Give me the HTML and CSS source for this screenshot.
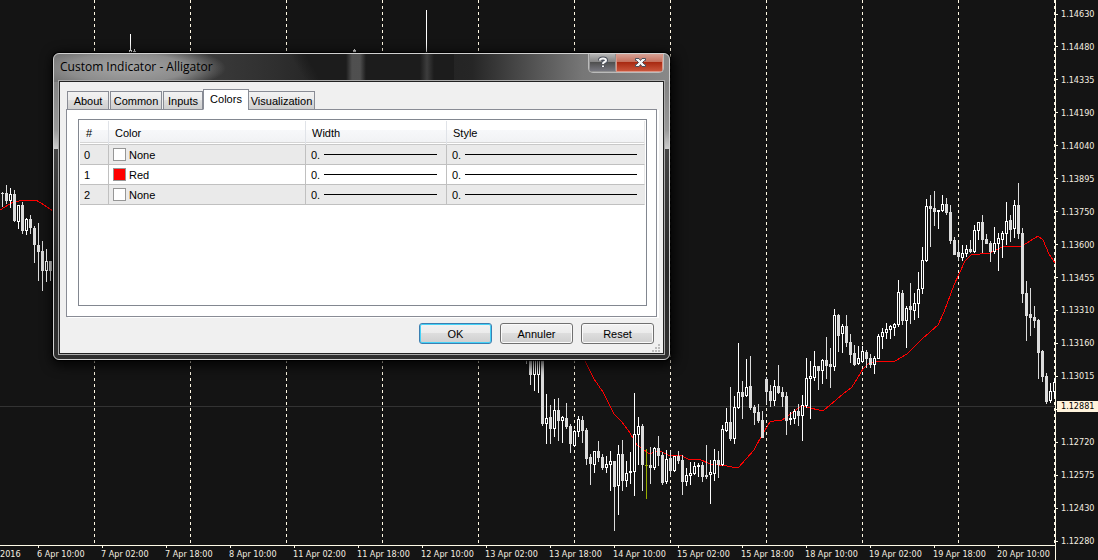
FILE: index.html
```html
<!DOCTYPE html>
<html lang="en">
<head>
<meta charset="utf-8">
<title>Custom Indicator - Alligator</title>
<link rel="stylesheet" href="styles.css">
</head>
<body>
<main class="terminal">
  <section class="chart">
    <svg class="plot" viewBox="0 0 1055 545" preserveAspectRatio="none" aria-label="Price chart">
      <g id="days" class="days"></g>
      <path class="last-line" d="M0 406.500H1055"/>
      <polyline class="average" points="0,210 5,207 13,202 25,200 36,200 44,205 53,211"/>
      <polyline class="average" points="583,356 585,361 594,379 603,392 614,414 622,422 630,433 637,445 643,449 648,453 652,453 657,451 662,452 670,456 680,455 688,459 699,459 710,464 718,465 727,466 732,467 739,467 746,459 754,450 762,435 770,422 774,421 782,420 788,416 801,406 806,407 823,411 830,405 843,394 852,387 863,369 868,364 880,361 895,361 907,354 913,348 922,339 930,332 938,325 944,312 954,285 965,261 971,255 980,254 990,253 1002,247 1006,246 1022,246 1038,236 1043,240 1049,254 1055,263"/>
      <g id="candles"></g>
    </svg>
    <ol class="prices" id="prices"></ol>
    <output class="last-price">1.12881</output>
  </section>
  <ol class="times" id="times"></ol>
</main>

<section class="dialog" role="dialog" aria-labelledby="title">
  <header class="titlebar">
    <h1 class="title" id="title">Custom Indicator - Alligator</h1>
    <div class="caption-buttons">
      <button class="caption help" type="button" aria-label="Help">
        <svg width="12" height="13" viewBox="0 0 12 13"><path class="glyph-edge" d="M3 4.500V4Q3 2.500 6 2.500T9 4.500Q9 5.500 7.500 6T6 8M6 9.500V11"/><path class="glyph" d="M3 4.500V4Q3 2.500 6 2.500T9 4.500Q9 5.500 7.500 6T6 8M6 9.500V11"/></svg>
      </button>
      <button class="caption close" type="button" aria-label="Close">
        <svg width="14" height="13" viewBox="0 0 14 13"><path class="shape" d="M2.500 2.500H6L7.500 4.500L9 2.500H12.500V4.500H11.500L9.500 6.500L11.500 8.500H12.500V10.500H9L7.500 8.500L6 10.500H2.500V8.500H3.500L5.500 6.500L3.500 4.500H2.500Z"/></svg>
      </button>
    </div>
  </header>
  <div class="client">
    <div class="tabs" role="tablist">
      <button class="tab" type="button" role="tab">About</button>
      <button class="tab" type="button" role="tab">Common</button>
      <button class="tab" type="button" role="tab">Inputs</button>
      <button class="tab active" type="button" role="tab" aria-selected="true">Colors</button>
      <button class="tab" type="button" role="tab">Visualization</button>
    </div>
    <div class="page" role="tabpanel">
      <div class="list">
        <table class="grid">
          <colgroup><col class="col-id"><col class="col-color"><col class="col-width"><col></colgroup>
          <thead><tr><th>#</th><th>Color</th><th>Width</th><th>Style</th></tr></thead>
          <tbody>
            <tr><td>0</td><td><div class="cell"><i class="swatch"></i>None</div></td><td><div class="cell">0.<i class="line"></i></div></td><td><div class="cell">0.<i class="line"></i></div></td></tr>
            <tr><td>1</td><td><div class="cell"><i class="swatch red"></i>Red</div></td><td><div class="cell">0.<i class="line"></i></div></td><td><div class="cell">0.<i class="line"></i></div></td></tr>
            <tr><td>2</td><td><div class="cell"><i class="swatch"></i>None</div></td><td><div class="cell">0.<i class="line"></i></div></td><td><div class="cell">0.<i class="line"></i></div></td></tr>
          </tbody>
        </table>
      </div>
    </div>
    <footer class="actions">
      <button class="button default" type="button">OK</button>
      <button class="button" type="button">Annuler</button>
      <button class="button" type="button">Reset</button>
    </footer>
    <svg class="grip" width="8" height="8" viewBox="0 0 8 8"><path d="M6 0h2v2h-2zM3 3h2v2h-2zM6 3h2v2h-2zM0 6h2v2h-2zM3 6h2v2h-2zM6 6h2v2h-2z"/></svg>
  </div>
</section>
<script src="chart.js"></script>
</body>
</html>
```

FILE: styles.css
```css
* { box-sizing: border-box; }

body {
  margin: 0;
  background: #141414;
  font-family: "Liberation Sans", Arial, sans-serif;
  font-size: 11px;
  color: #000;
}

button { font: inherit; color: inherit; padding: 0; margin: 0; }
ol { list-style: none; margin: 0; padding: 0; }

/* Chart */
.terminal { display: flex; flex-direction: column; height: 100vh; overflow: hidden; }
.chart { position: relative; flex: 1; min-height: 0; display: flex; }
.plot { flex: 1; min-width: 0; width: 100%; height: 100%; shape-rendering: crispEdges; border-bottom: 1px solid #fffbe8; }
.days path { stroke: #fff8e4; stroke-dasharray: 3 3; fill: none; }
.last-line { stroke: #333; }
.average { fill: none; stroke: #f00; stroke-width: 1; }
.up { stroke: #fff; fill: #141414; }
.down { stroke: #dcdcdc; fill: #dcdcdc; }
.mark { stroke: #9aaf00; fill: #9aaf00; }

.prices, .times, .last-price { font: 9px/10px "DejaVu Sans Condensed", "DejaVu Sans", sans-serif; color: #f4eee0; }
.prices {
  width: 43px;
  margin-bottom: -14px;
  padding: 9px 0 14px;
  border-left: 1px solid #fffbe8;
  display: flex;
  flex-direction: column;
  justify-content: space-between;
  background: #141414;
}
.prices li { display: flex; align-items: center; gap: 3px; height: 10px; }
.prices li::before { content: ""; width: 2px; height: 1px; background: #fffbe8; }
.last-price { position: absolute; right: 0; top: 401px; width: 41px; height: 11px; padding-left: 4px; background: #fff3dc; color: #000; line-height: 11px; }

.times { display: flex; height: 14px; overflow: hidden; white-space: nowrap; }
.times li { flex: 0 0 64px; padding-top: 3px; position: relative; }
.times li::before { content: ""; position: absolute; left: 1px; top: 0; width: 1px; height: 2px; background: #fffbe8; }
.times li:first-child { flex-basis: 37px; }
.times li:first-child::before { display: none; }

/* Dialog */
.dialog {
  position: absolute;
  left: 53px;
  top: 53px;
  width: 617px;
  max-width: 100%;
  padding: 0 5px 5px;
  border: 1px solid #d0d0d0;
  border-radius: 6px;
  background:
    radial-gradient(ellipse 100px 24px at 72px 14px, #a4a4a4, #8c8c8c 60%, transparent) no-repeat,
    linear-gradient(90deg, transparent 292px, rgba(130, 130, 130, 0.5) 298px, rgba(130, 130, 130, 0.5) 306px, transparent 312px) 0 0 / 100% 28px no-repeat,
    linear-gradient(90deg, transparent 366px, rgba(110, 110, 110, 0.4) 373px, transparent 380px) 0 0 / 100% 28px no-repeat,
    linear-gradient(60deg, transparent 218px, #1c1c1c 232px) 0 0 / 400px 28px no-repeat,
    linear-gradient(90deg, #6c6c6c, #3a3a3a 25%, #303030 35%, #1c1c1c 50%, #262626 68%, #777 86%, #888) 0 0 / 100% 28px no-repeat,
    linear-gradient(#777, #999 25%, #ccc 31%, #444 31%, #292929 70%, #303030);
  box-shadow: 0 0 1px 1px #000, 2px 3px 12px 3px rgba(0, 0, 0, 0.8);
}
.titlebar { display: flex; justify-content: space-between; height: 27px; }
.title { margin: 0; padding-left: 1px; font: 12px/26px "Open Sans", "Noto Sans", sans-serif; }
.caption-buttons { display: flex; height: 19px; border: 1px solid #bbb; border-top: 0; border-radius: 0 0 5px 5px; overflow: hidden; }
.caption { display: flex; align-items: center; justify-content: center; border: 1px solid #929292; border-top: 0; }
.help { width: 27px; background: linear-gradient(#b5b5b5, #858585 45%, #505050 50%, #77777f); }
.close { width: 47px; border-color: #dc9585; background: linear-gradient(#d7a195, #c5715e 45%, #a92a12 50%, #c9543a); }
.glyph-edge { fill: none; stroke: #4b505c; stroke-width: 4; }
.glyph { fill: none; stroke: #f5f5f5; stroke-width: 2; }
.shape { fill: #f5f5f5; stroke: #4b505c; }

.client {
  position: relative;
  border: 1px solid #222;
  outline: 1px solid #aaa;
  background: #f0f0f0;
  padding: 7px 6px 9px;
}
.tabs { display: flex; align-items: flex-end; height: 21px; padding-left: 1px; margin-bottom: -1px; position: relative; }
.tab {
  height: 19px;
  border: 1px solid #898c95;
  margin-right: 1px;
  background: linear-gradient(#f2f2f2, #ebebeb 50%, #ddd 50%, #cfcfcf);
  white-space: nowrap;
}
.tab:nth-child(1) { width: 42px; }
.tab:nth-child(2) { width: 52px; }
.tab:nth-child(3) { width: 40px; margin-right: 0; }
.tab:nth-child(5) { width: 67px; margin-left: -2px; }
.tab.active { width: 46px; height: 21px; padding-bottom: 2px; background: #fff; border-bottom-color: #fff; }
.page { border: 1px solid #898c95; background: #fff; padding: 9px 9px 10px 11px; box-shadow: 2px 1px 0 #fff; }
.list { height: 187px; border: 1px solid #828790; padding: 1px; }

.grid { width: 100%; border-collapse: separate; border-spacing: 0; table-layout: fixed; }
.col-id { width: 29px; }
.col-color { width: 197px; }
.col-width { width: 141px; }
.grid th {
  height: 24px;
  padding: 0 0 0 6px;
  text-align: left;
  font-weight: normal;
  background: linear-gradient(#fff 40%, #f7f8fa 40%, #f1f2f4 92%, #d5d5d5 92%, #d5d5d5 96%, #fff 96%);
  border-right: 1px solid #e0e3e8;
  border-bottom: 1px solid #c8c8c8;
}
.grid td { height: 20px; padding: 0 0 0 4px; border-right: 1px solid #c0c0c0; border-bottom: 1px solid #c0c0c0; }
.grid th:last-child, .grid td:last-child { border-right-color: #e8e8e8; }
.grid tbody tr:nth-child(odd) { background: #eaeaea; }
.cell { display: flex; align-items: center; }
.grid td:nth-child(n+3) { padding: 0 9px 0 5px; }
.grid td:nth-child(4) { padding-right: 7px; }
.swatch { width: 13px; height: 13px; margin-right: 3px; border: 1px solid #969696; background: #fff; }
.swatch.red { background: #f00; }
.line { flex: 1; height: 1px; margin-left: 4px; background: #000; }

.actions { display: flex; justify-content: flex-end; gap: 8px; padding: 6px 3px 0 0; }
.button {
  width: 73px;
  height: 21px;
  border: 1px solid #707070;
  border-radius: 3px;
  background: linear-gradient(#f2f2f2, #ebebeb 50%, #ddd 50%, #cfcfcf);
  box-shadow: inset 0 0 0 1px #fafafa;
}
.button.default { border-color: #3c7fb1; box-shadow: inset 0 0 0 1px #45d2f7; }
.grip { position: absolute; right: 3px; bottom: 1px; fill: #bcbcbc; }
```

FILE: chart.js
```js
const NS = "http://www.w3.org/2000/svg";
const STEP = 4;

// Each bar: high, body top, body bottom, low, kind (1 up, 0 down, 2 marked)
const runs = [
  { x: 2, bars: [
    [192,193,193,207,0],[185,193,200,204,0],[188,194,200,208,1],[190,194,220,222,0],[205,205,221,229,1],
    [202,205,230,234,0],[218,219,230,235,1],[215,219,227,234,0],[226,228,244,263,0],[223,245,251,281,0],
    [241,251,270,291,0],[249,261,270,282,1],[261,261,270,281,0]] },
  { x: 130, bars: [[34,50,52,53,1],[49,51,52,53,0]] },
  { x: 354, bars: [[49,50,52,53,0]] },
  { x: 426, bars: [[10,52,53,54,1]] },
  { x: 526, bars: [
    [350,350,352,364,0],[350,350,374,385,0],[350,350,374,391,1],[350,350,374,393,1],[350,350,423,426,0],
    [394,418,423,444,1],[405,417,428,444,0],[399,410,428,437,1],[398,410,420,441,0],[416,417,420,443,1],
    [403,418,426,429,0],[424,426,443,453,0],[430,431,445,447,1],[416,419,431,437,1],[416,420,430,443,0],
    [428,430,458,465,0],[454,457,463,485,0],[451,451,464,473,1],[441,451,457,462,0],[454,457,467,470,0],
    [456,464,467,473,1],[451,461,464,491,1],[461,461,486,531,0],[445,454,485,515,1],[440,454,480,491,0],
    [461,473,480,487,1],[452,471,472,484,1],[393,434,471,496,1],[417,426,434,465,1],[424,426,464,491,0],
    [449,465,465,499,2],[447,465,467,484,0],[447,448,467,470,1],[436,448,455,466,0],[452,455,482,485,0],
    [450,459,481,484,1],[451,458,470,476,0],[456,456,470,472,1],[451,456,460,464,0],[455,460,481,495,0],
    [468,475,481,486,1],[462,473,475,485,1],[462,466,473,475,1],[463,465,466,477,1],[462,465,476,482,0],
    [445,475,476,479,0],[460,472,474,504,1],[449,460,473,481,1],[451,460,464,478,0],[425,429,464,466,1],
    [408,422,430,432,1],[387,422,438,441,0],[396,407,438,444,1],[343,392,407,409,1],[381,392,396,419,0],
    [359,387,395,397,1],[356,386,407,410,0],[405,407,412,425,0],[404,412,420,423,0],[411,420,437,438,0],
    [377,379,391,404,0],[385,391,400,407,0],[380,386,400,406,1],[365,386,392,394,0],[387,392,396,407,0],
    [392,396,420,435,0],[412,418,419,425,1],[409,411,418,424,1],[404,411,415,426,0],[395,405,415,441,1],
    [358,378,405,408,1],[361,376,378,419,1],[351,366,377,381,1],[366,366,370,390,0],[359,360,370,384,1],
    [337,360,365,379,0],[348,364,366,388,0],[309,315,366,371,1],[314,315,335,352,0],[324,326,333,353,1],
    [315,326,342,347,0],[334,342,354,363,0],[345,353,364,366,0],[346,358,363,365,1],[346,351,361,363,1],
    [350,352,358,368,0],[354,358,364,368,0],[356,358,364,374,1],[334,336,358,359,1],[328,332,336,349,1],
    [323,329,332,339,1],[325,326,329,339,1],[323,324,327,336,1],[280,292,324,327,1],[290,293,320,325,0],
    [306,308,320,348,1],[283,306,309,324,0],[293,303,310,320,1],[272,289,303,318,1],[247,260,288,294,1],
    [199,206,260,262,1],[195,206,208,247,0],[191,208,211,226,0],[210,210,211,229,1],[195,204,210,212,1],
    [198,204,212,215,0],[205,212,240,244,0],[237,240,254,255,0],[243,252,256,260,0],[245,253,257,261,1],
    [245,249,253,257,1],[240,249,251,253,0],[225,230,251,253,1],[222,222,230,240,1],[215,222,239,253,0],
    [234,239,243,244,0],[241,243,251,262,0],[227,243,251,254,1],[233,238,243,271,1],[231,233,239,258,1],
    [202,221,233,245,1],[215,220,229,242,0],[200,205,228,238,1],[183,205,233,239,0],[228,233,293,303,0],
    [281,293,315,341,0],[288,314,317,336,0],[306,317,320,328,0],[319,320,352,379,0],[350,351,376,382,0],
    [373,376,401,404,0],[383,391,400,403,1],[378,382,391,398,1]] }
];

function add(parent, name, attrs) {
  const node = document.createElementNS(NS, name);
  for (const key in attrs) node.setAttribute(key, attrs[key]);
  parent.appendChild(node);
}

const candles = document.getElementById("candles");
const kinds = ["down", "up", "mark"];
for (const run of runs) {
  run.bars.forEach(([high, top, bottom, low, kind], i) => {
    const x = run.x + i * STEP + 0.5;
    const cls = kinds[kind];
    add(candles, "path", { class: cls, d: `M${x} ${high}V${low}` });
    add(candles, "rect", { class: cls, x: x - 1, y: top + 0.5, width: 2, height: Math.max(bottom - top, 0.01) });
  });
}

const days = document.getElementById("days");
for (let x = 94; x < 1056; x += 96) add(days, "path", { d: `M${x + 0.5} 0V545` });

function fill(id, texts) {
  const list = document.getElementById(id);
  for (const text of texts) {
    const item = document.createElement("li");
    item.textContent = text;
    list.appendChild(item);
  }
}
// The empty entry is the level covered by the current price tag
fill("prices", ["1.14630", "1.14480", "1.14335", "1.14190", "1.14040", "1.13895", "1.13750", "1.13600", "1.13455",
  "1.13310", "1.13160", "1.13015", "", "1.12720", "1.12575", "1.12430", "1.12280"]);
fill("times", ["2016", "6 Apr 10:00", "7 Apr 02:00", "7 Apr 18:00", "8 Apr 10:00", "11 Apr 02:00", "11 Apr 18:00",
  "12 Apr 10:00", "13 Apr 02:00", "13 Apr 18:00", "14 Apr 10:00", "15 Apr 02:00", "15 Apr 18:00", "18 Apr 10:00",
  "19 Apr 02:00", "19 Apr 18:00", "20 Apr 10:00"]);
```
